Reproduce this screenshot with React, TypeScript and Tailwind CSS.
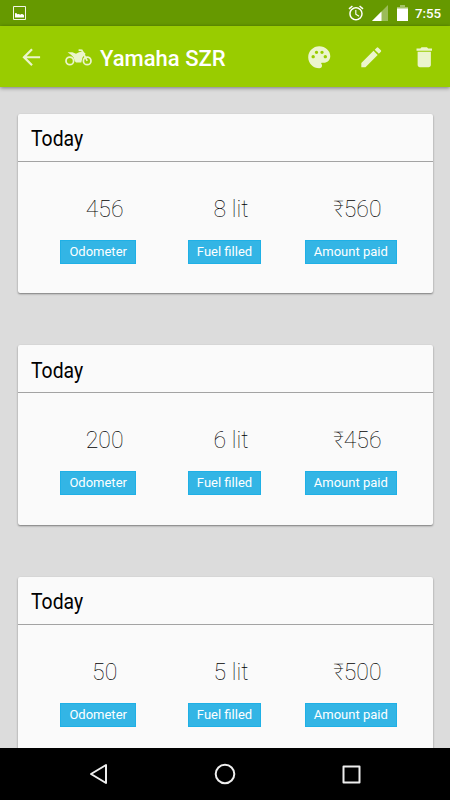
import { MdAlarm, MdArrowBack, MdDelete, MdEdit, MdPalette } from "react-icons/md";

const entries = [
    { title: "Today", odometer: "456", fuel: "8 lit", amount: "₹560" },
    { title: "Today", odometer: "200", fuel: "6 lit", amount: "₹456" },
    { title: "Today", odometer: "50", fuel: "5 lit", amount: "₹500" },
];

function BikeIcon() {
    return (
        <svg className="w-[27px] h-[17px] ml-[20px]" viewBox="0 0 27 17">
            <g fill="none" stroke="currentColor" strokeWidth="1.7">
                <circle cx="4.8" cy="11.9" r="3.8" />
                <circle cx="22.2" cy="11.9" r="3.8" />
                <path d="M13.6 1.2l3.2.2 1.6 3 3.8 7.5" />
            </g>
            <path fill="currentColor" d="M2.6 3.2l4.8.1L11 4.8l3-1.6 4.2-.7 2.4 2.2-.9 1.2-2.2 2.6-1.2 5.1h-5.3l-1.4-1.8-1-3.4L6.3 6z" />
        </svg>
    );
}

function StatusBar() {
    return (
        <div className="h-[26px] shrink-0 flex items-center bg-[#669900] text-white pl-[13px] pr-[9px]">
            <svg className="w-[13px] h-[14px]" viewBox="0 0 13 14">
                <path fill="none" stroke="#f1f6e6" d="M.5.5h12v13H.5z" />
                <path fill="#fff" d="M2 11.5V7.3l1.2-.3 1.2 1.3 1.6-.3 1.1.8 1.4-.9 1.5.4 1 1v2.2z" />
            </svg>
            <div className="ml-auto flex items-center">
                <MdAlarm className="w-[18px] h-[18px]" />
                <svg className="w-4 h-4 ml-[7px]" viewBox="0 0 16 16">
                    <path fill="#fff" fillOpacity=".35" d="M16 0v16H0z" />
                    <path fill="#fff" d="M9.5 6.5V16H0z" />
                </svg>
                <svg className="w-[11px] h-4 ml-[9px]" viewBox="0 0 11 16">
                    <path fill="#fff" fillOpacity=".4" d="M3 0h5v2h3v2H0V2h3z" />
                    <path fill="#fff" d="M0 3.5h11V16H0z" />
                </svg>
                <span className="ml-[7px] w-[26px] pt-px text-[13.3px] leading-4 font-medium whitespace-nowrap">7:55</span>
            </div>
        </div>
    );
}

function Toolbar() {
    return (
        <div className="relative h-[61px] shrink-0 flex items-center bg-[#99cc00] text-[#ebf5cc] pl-[18px] pr-[13px] pt-px shadow-[0_1px_4px_rgba(0,0,0,0.45)]">
            <MdArrowBack className="w-[26.5px] h-[26.5px]" />
            <BikeIcon />
            <h1 className="ml-[8.5px] pt-[2px] text-[22px] font-medium text-white whitespace-nowrap">Yamaha SZR</h1>
            <div className="ml-auto flex items-center gap-[26px]">
                <MdPalette className="w-[26.5px] h-[26.5px]" />
                <MdEdit className="w-[26.5px] h-[26.5px]" />
                <MdDelete className="w-[26.5px] h-[26.5px]" />
            </div>
        </div>
    );
}

function Stat({ value, label }: { value: string; label: string }) {
    return (
        <div className="flex-1 flex flex-col items-center">
            <p className="pl-[13px] text-[23px] leading-7 font-thin text-black whitespace-nowrap">{value}</p>
            <span className="mt-4 h-6 px-[8px] flex items-center bg-[#33b5e5] border border-[#1fb0e6] text-[13px] text-white whitespace-nowrap">{label}</span>
        </div>
    );
}

function EntryCard({ entry }: { entry: (typeof entries)[number] }) {
    return (
        <div className="h-[179.5px] shrink-0 rounded-[2px] bg-[#fafafa] shadow-[0_1px_2px_rgba(0,0,0,0.45)]">
            <div className="h-[48px] flex items-center pl-[13px] border-b border-[#a3a3a3]">
                <h2 className="origin-left scale-x-[0.86] pt-[4px] text-[22.5px] text-black">{entry.title}</h2>
            </div>
            <div className="flex pl-[17.5px] pr-[18.5px] pt-[34px]">
                <Stat value={entry.odometer} label="Odometer" />
                <Stat value={entry.fuel} label="Fuel filled" />
                <Stat value={entry.amount} label="Amount paid" />
            </div>
        </div>
    );
}

function NavBar() {
    return (
        <div className="h-[52px] shrink-0 flex items-center justify-between bg-black px-[89px]">
            <svg className="w-[19px] h-[22px]" viewBox="0 0 19 22" fill="none" stroke="#eee" strokeWidth="2" strokeLinejoin="round">
                <path d="M17 2v18L2 11z" />
            </svg>
            <svg className="w-[22px] h-[22px]" viewBox="0 0 22 22" fill="none" stroke="#eee" strokeWidth="2">
                <circle cx="11" cy="11" r="9.3" />
            </svg>
            <svg className="w-[19px] h-[19px]" viewBox="0 0 19 19" fill="none" stroke="#eee" strokeWidth="2" strokeLinejoin="round">
                <path d="M1.5 1.5h16v16h-16z" />
            </svg>
        </div>
    );
}

export default function App() {
    return (
        <div className="w-[450px] h-[800px] flex flex-col overflow-hidden bg-[#dcdcdc] font-[Roboto,sans-serif]">
            <StatusBar />
            <Toolbar />
            <div className="flex-1 min-h-0 overflow-hidden flex flex-col gap-[52px] px-[17.5px] pt-[26.7px]">
                {entries.map((entry, i) => (
                    <EntryCard key={i} entry={entry} />
                ))}
            </div>
            <NavBar />
        </div>
    );
}
